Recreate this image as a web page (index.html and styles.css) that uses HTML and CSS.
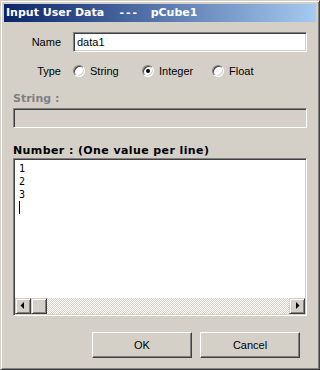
FILE: index.html
```html
<!DOCTYPE html>
<html lang="en">
<head>
    <meta charset="UTF-8">
    <meta name="viewport" content="width=device-width, initial-scale=1.0">
    <title>Input User Data</title>
    <link rel="stylesheet" href="styles.css">
</head>
<body>
    <div class="window">
        <div class="titlebar">
            <span class="title">Input User Data    <span class="dash">---</span>   pCube1</span>
        </div>
        <div class="content">
            <div class="row nameRow">
                <span class="label">Name</span>
                <div class="field edit">data1</div>
            </div>
            <div class="row typeRow">
                <span class="label">Type</span>
                <div class="radios">
                    <span class="option"><span class="radio"></span>String</span>
                    <span class="option"><span class="radio checked"></span>Integer</span>
                    <span class="option"><span class="radio"></span>Float</span>
                </div>
            </div>

            <div class="groupLabel disabled">String :</div>
            <div class="field off"></div>

            <div class="groupLabel numberLabel">Number : (One value per line)</div>
            <div class="memo">
                <div class="memoText">
                    <div class="line">1</div>
                    <div class="line">2</div>
                    <div class="line">3</div>
                    <div class="line"><span class="caret"></span></div>
                </div>
                <div class="hscroll">
                    <div class="sbBtn">
                        <svg width="8" height="8" viewBox="0 0 8 8"><polygon points="5,0 5,7 1.5,3.5" fill="#000"/></svg>
                    </div>
                    <div class="sbThumb"></div>
                    <div class="sbTrack"></div>
                    <div class="sbBtn">
                        <svg width="8" height="8" viewBox="0 0 8 8"><polygon points="3,0 3,7 6.5,3.5" fill="#000"/></svg>
                    </div>
                </div>
            </div>

            <div class="buttons">
                <button class="btn">OK</button>
                <button class="btn">Cancel</button>
            </div>
        </div>
    </div>
</body>
</html>
```

FILE: styles.css
```css
body {
    margin: 0;
    font-family: "Liberation Sans", Arial, sans-serif;
    font-size: 11px;
    color: #000;
}

.window {
    width: 320px;
    height: 370px;
    box-sizing: border-box;
    background: #d4d0c8;
    border: 1px solid;
    border-color: #d4d0c8 #404040 #404040 #d4d0c8;
    box-shadow: inset 1px 1px #fff, inset -1px -1px #808080;
    padding: 3px;
}

.titlebar {
    height: 18px;
    background: linear-gradient(to right, #0a246a, #a6caf0);
    padding-left: 2px;
}
.title {
    font-family: "DejaVu Sans", sans-serif;
    font-weight: bold;
    font-size: 11px;
    line-height: 18px;
    color: #fff;
    white-space: pre;
}
.dash {
    letter-spacing: 2px;
}

.content {
    padding: 0 9px;
}

.row {
    display: grid;
    grid-template-columns: 60px 1fr;
    align-items: center;
}
.label {
    text-align: right;
    padding-right: 12px;
}
.nameRow {
    margin-top: 10px;
}
.typeRow {
    margin-top: 9px;
    height: 20px;
}

/* sunken edit box */
.field {
    height: 20px;
    box-sizing: border-box;
    border: 1px solid;
    border-color: #808080 #fff #fff #808080;
    box-shadow: inset 1px 1px #404040, inset -1px -1px #d4d0c8;
    background: #fff;
}
.edit {
    padding-left: 3px;
    line-height: 18px;
}
.off {
    margin-top: 3px;
    background: #d4d0c8;
}

.radios {
    display: flex;
}
.option {
    display: flex;
    align-items: center;
    width: 70px;
}
.option:first-child {
    width: 69px;
}
.radio {
    width: 12px;
    height: 12px;
    box-sizing: border-box;
    border-radius: 50%;
    border: 1px solid;
    border-color: #808080 #fff #fff #808080;
    box-shadow: inset 1px 1px #404040, inset -1px -1px #d4d0c8;
    background: #fff;
    margin-right: 5px;
    display: flex;
    align-items: center;
    justify-content: center;
}
.radio.checked::after {
    content: "";
    width: 4px;
    height: 4px;
    border-radius: 50%;
    background: #000;
}

.groupLabel {
    font-family: "DejaVu Sans", sans-serif;
    font-weight: bold;
    font-size: 11px;
    line-height: 13px;
    margin-top: 11px;
}
.disabled {
    color: #808080;
}
.numberLabel {
    margin-top: 16px;
    letter-spacing: 0.4px;
}

.memo {
    margin-top: 1px;
    height: 158px;
    box-sizing: border-box;
    border: 1px solid;
    border-color: #808080 #fff #fff #808080;
    box-shadow: inset 1px 1px #404040, inset -1px -1px #d4d0c8;
    background: #fff;
    padding: 1px;
    display: flex;
    flex-direction: column;
}
.memoText {
    flex: 1;
    padding: 2px 0 0 4px;
    font-family: "DejaVu Sans Mono", monospace;
    font-size: 10px;
}
.line {
    height: 13px;
    line-height: 13px;
}
.caret {
    display: inline-block;
    width: 1px;
    height: 13px;
    background: #000;
    vertical-align: top;
}

.hscroll {
    height: 16px;
    display: flex;
}
.sbBtn {
    width: 16px;
    height: 16px;
    box-sizing: border-box;
    background: #d4d0c8;
    border: 1px solid;
    border-color: #d4d0c8 #404040 #404040 #d4d0c8;
    box-shadow: inset 1px 1px #fff, inset -1px -1px #808080;
    display: flex;
    align-items: center;
    justify-content: center;
}
.sbThumb {
    width: 16px;
    height: 16px;
    box-sizing: border-box;
    background: #d4d0c8;
    border: 1px solid;
    border-color: #d4d0c8 #404040 #404040 #d4d0c8;
    box-shadow: inset 1px 1px #fff, inset -1px -1px #808080;
}
.sbTrack {
    flex: 1;
    background: repeating-conic-gradient(#fff 0 25%, #d4d0c8 0 50%) 0 0 / 2px 2px;
}

.buttons {
    margin-top: 16px;
    display: flex;
    justify-content: flex-end;
    gap: 8px;
    padding-right: 7px;
}
.btn {
    width: 100px;
    height: 26px;
    box-sizing: border-box;
    background: #d4d0c8;
    border: 1px solid;
    border-color: #fff #404040 #404040 #fff;
    box-shadow: inset -1px -1px #808080, inset 1px 1px #d4d0c8;
    font-family: "Liberation Sans", Arial, sans-serif;
    font-size: 11px;
    color: #000;
    padding: 0;
}
```
